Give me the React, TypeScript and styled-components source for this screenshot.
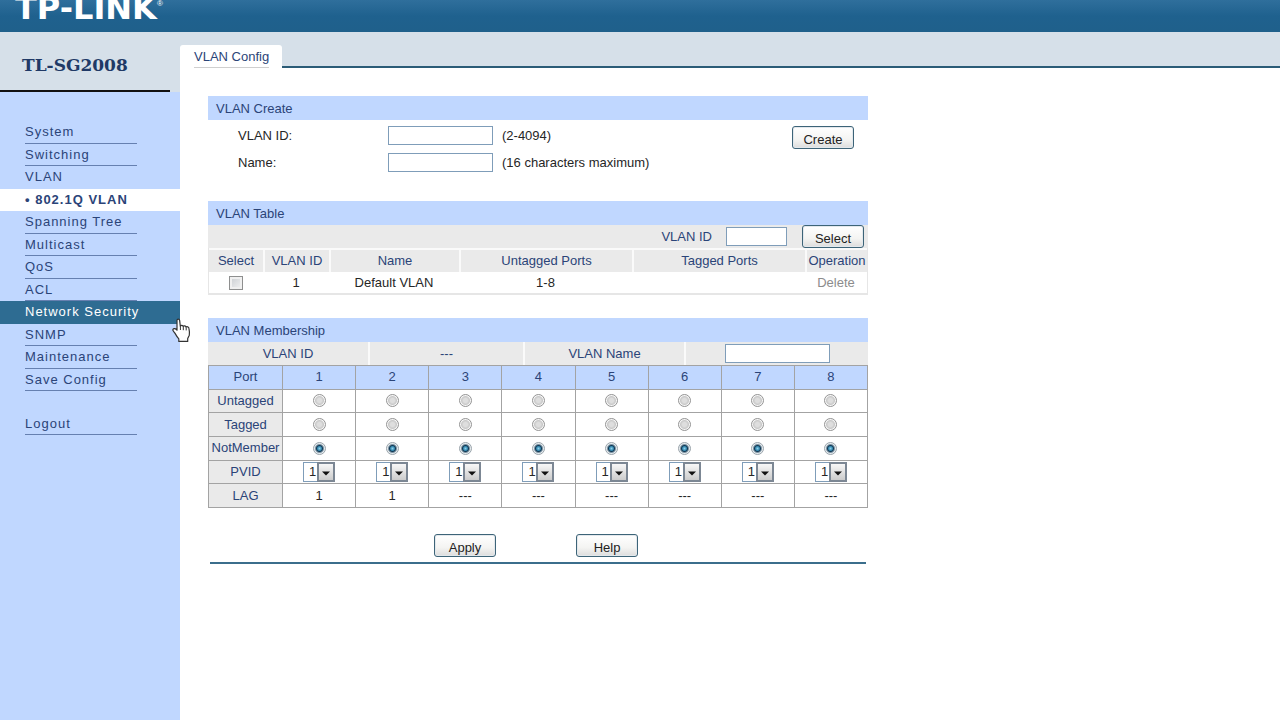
import React from 'react';
import styled, { createGlobalStyle, css } from 'styled-components';

const color = {
  panel: '#c0d7ff',
  strip: '#d6e0e9',
  brand: '#1f618e',
  active: '#2e6c92',
  text: '#2b4478',
  body: '#262626',
  cell: '#eaeaea',
  grid: '#a3a3a3',
};

const GlobalStyle = createGlobalStyle`
  * { box-sizing: border-box; }
  body {
    margin: 0;
    background: #fff;
    font-family: "Liberation Sans", Arial, sans-serif;
    font-size: 13px;
    line-height: 16px;
    color: ${color.body};
  }
  input, button, select { font: inherit; color: inherit; margin: 0; }
  a { color: inherit; text-decoration: none; }
  h1, h2, p { margin: 0; font: inherit; }
`;

const Page = styled.div`
  display: flex;
  flex-direction: column;
  min-height: 100vh;
`;

const TopBar = styled.header`
  height: 32px;
  padding-left: 15px;
  overflow: hidden;
  background: linear-gradient(#2f6f9c, ${color.brand} 50%, #1f608b);
  color: #fff;
`;

const Brand = styled.div`
  display: flex;
  align-items: flex-start;
  margin-top: -10px;
  font: bold 32px/36px "DejaVu Sans", sans-serif;
`;

const Registered = styled.sup`
  margin-top: 10px;
  font: 8px/8px "Liberation Sans", sans-serif;
`;

const Columns = styled.div`
  display: flex;
  flex: 1;
`;

const Sidebar = styled.aside`
  width: 180px;
  flex: none;
  background: ${color.panel};
`;

const ModelBox = styled.div`
  height: 60px;
  padding-right: 10px;
  background: ${color.strip};
`;

const Model = styled.h1`
  height: 60px;
  padding: 22px 0 0 22px;
  border-bottom: 2px solid #111;
  font: bold 17px/22px "DejaVu Serif", serif;
  color: #203966;
`;

const Menu = styled.nav`
  display: grid;
  grid-template-columns: minmax(0, 1fr);
  grid-auto-rows: 1fr;
  height: 270px;
  margin-top: 29px;
`;

const itemStates = {
  plain: css`
    color: ${color.text};
  `,
  open: css`
    color: ${color.text};
    span { border-color: transparent; }
  `,
  current: css`
    background: #fff;
    color: ${color.text};
    font-weight: bold;
    span { border-color: transparent; }
  `,
  hover: css`
    background: ${color.active};
    color: #fff;
    span { border-color: transparent; }
  `,
};

const MenuLink = styled.a<{ $state: keyof typeof itemStates }>`
  position: relative;
  display: flex;
  padding: 0 43px 0 25px;
  letter-spacing: 1px;
  white-space: nowrap;
  ${(p) => itemStates[p.$state]}
`;

const MenuText = styled.span`
  flex: 1;
  min-width: 0;
  padding-top: 3px;
  border-bottom: 1px solid #6680b0;
`;

const LogoutMenu = styled.nav`
  display: grid;
  height: 22px;
  margin-top: 22px;
`;

const HandCursor = styled.svg`
  position: absolute;
  left: 171px;
  top: 17px;
  z-index: 1;
`;

const Main = styled.main`
  flex: 1;
  min-width: 0;
`;

const TabStrip = styled.div`
  display: flex;
  height: 36px;
  padding-top: 13px;
  background: ${color.strip};
`;

const Tab = styled.a`
  width: 102px;
  padding: 4px 13px 0 14px;
  border-radius: 3px 3px 0 0;
  background: #fff;
  color: ${color.text};
  white-space: nowrap;
`;

const TabText = styled.span`
  display: block;
  height: 19px;
  border-bottom: 1px solid #cfcfcf;
`;

const TabRule = styled.div`
  flex: 1;
  border-bottom: 2px solid #2b5c77;
`;

const Content = styled.form`
  max-width: 688px;
  padding: 28px 0 0 28px;
`;

const Section = styled.section<{ $gap: number }>`
  margin-bottom: ${(p) => p.$gap}px;
`;

const Title = styled.h2`
  height: 24px;
  padding: 5px 8px 0;
  background: ${color.panel};
  color: ${color.text};
`;

const CreateBody = styled.div`
  display: flex;
  align-items: flex-start;
  padding: 6px 14px 0 30px;
`;

const Fields = styled.div`
  flex: 1;
  display: grid;
  gap: 8px;
`;

const Field = styled.div`
  display: flex;
  align-items: center;
  height: 19px;
`;

const FieldLabel = styled.label`
  width: 150px;
`;

const Hint = styled.span`
  margin-left: 9px;
`;

const TextBox = styled.input<{ $width: number }>`
  width: ${(p) => p.$width}px;
  height: 19px;
  padding: 0 3px;
  border: 1px solid #7f9db9;
  border-radius: 0;
  background: #fff;
`;

const PushButton = styled.button`
  width: 62px;
  height: 23px;
  padding: 4px 0 0;
  border: 1px solid #3d6478;
  border-radius: 3px;
  background: linear-gradient(#fff, #f4f4f2 60%, #dcdcdc);
  box-shadow: inset 0 0 0 1px #e3e8ec;
  line-height: 16px;
  color: #222;
`;

const SearchRow = styled.div`
  display: flex;
  align-items: center;
  justify-content: flex-end;
  height: 23px;
  padding-right: 4px;
  background: ${color.cell};
  color: ${color.text};
`;

const SearchLabel = styled.label`
  margin-right: 14px;
`;

const SearchBoxWrap = styled.div`
  display: flex;
  margin-right: 15px;
`;

const ListTable = styled.table`
  width: 100%;
  table-layout: fixed;
  border-collapse: separate;
  border-spacing: 0;
  border: 1px solid #e6e6e6;
  border-width: 0 1px 2px;
  text-align: center;

  th {
    height: 24px;
    padding: 0;
    border-top: 2px solid #fafafa;
    background: ${color.cell};
    color: ${color.text};
    font-weight: normal;
    white-space: nowrap;
  }
  th + th { border-left: 2px solid #fafafa; }
  td {
    height: 21px;
    padding: 0;
  }
`;

const Col = styled.col<{ $w?: number }>`
  width: ${(p) => (p.$w ? `${p.$w}px` : 'auto')};
`;

const CheckBox = styled.input`
  appearance: none;
  display: block;
  width: 14px;
  height: 14px;
  margin: 1px auto 0;
  border: 1px solid #8e8f8f;
  background: linear-gradient(135deg, #c8ccd0, #f4f4f4);
  box-shadow: inset 0 0 0 2px #f0f0f0;
`;

const Disabled = styled.a`
  color: #8c8c8c;
`;

const Info = styled.div`
  display: grid;
  grid-template-columns: 160fr 155fr 161fr 184fr;
  height: 23px;
  background: ${color.cell};
  color: ${color.text};
`;

const InfoCell = styled.div`
  display: flex;
  align-items: center;
  justify-content: center;
  & + & { border-left: 2px solid #fafafa; }
`;

const PortTable = styled.table`
  width: 100%;
  height: 143px;
  table-layout: fixed;
  border-collapse: collapse;
  text-align: center;

  th, td {
    height: 23px;
    padding: 0;
    border: 1px solid ${color.grid};
  }
  th {
    background: ${color.cell};
    color: ${color.text};
    font-weight: normal;
  }
  th[scope='col'] { background: ${color.panel}; }
`;

const Radio = styled.input`
  appearance: none;
  display: block;
  width: 13px;
  height: 13px;
  margin: 0 auto;
  border: 1px solid #949494;
  border-radius: 50%;
  background: radial-gradient(circle, #dedede 0 2px, #c9c9c9 4px, #f6f6f6 5px);

  &:checked {
    border-color: #9aa4ab;
    background: radial-gradient(circle, #8fd0ea 0, #3589b0 2px, #123a56 3px, #e6ebee 5px);
  }
`;

const Picker = styled.span`
  position: relative;
  display: block;
  width: 32px;
  height: 20px;
  margin: 0 auto;
`;

const PickerSelect = styled.select`
  appearance: none;
  display: block;
  width: 100%;
  height: 100%;
  padding: 0 0 0 5px;
  border: 1px solid #7f9db9;
  border-radius: 0;
  background: #fff;
`;

const PickerArrow = styled.svg`
  position: absolute;
  right: 0;
  top: 0;
  pointer-events: none;
`;

const Actions = styled.div`
  display: flex;
  justify-content: center;
  gap: 80px;
  margin: 0 2px;
  padding: 0 4px 5px 0;
  border-bottom: 2px solid #3b6e8c;
`;

type ItemState = keyof typeof itemStates;

const menu: [string, ItemState][] = [
  ['System', 'plain'],
  ['Switching', 'plain'],
  ['VLAN', 'open'],
  ['• 802.1Q VLAN', 'current'],
  ['Spanning Tree', 'plain'],
  ['Multicast', 'plain'],
  ['QoS', 'plain'],
  ['ACL', 'plain'],
  ['Network Security', 'hover'],
  ['SNMP', 'plain'],
  ['Maintenance', 'plain'],
  ['Save Config', 'plain'],
];

const ports = [1, 2, 3, 4, 5, 6, 7, 8];
const modes = ['Untagged', 'Tagged', 'NotMember'];
const lag = ['1', '1', '---', '---', '---', '---', '---', '---'];

function Hand() {
  return (
    <HandCursor width="20" height="25" viewBox="0 0 20 25" aria-hidden="true">
      <path
        d="M6 2.600c0-1.900 2.500-1.900 2.700 0l.6 5.600c.5-1.300 2.700-1.100 2.900.3.600-1 2.500-.8 2.800.7.800-.9 2.700-.5 2.900 1 .5 2.500.9 4.800.4 7l-1.600 3.200v3H7.800v-2.600c-1.600-1.800-2.700-3.500-3.900-5.700-.8-1.400-2.700-2.600-2-3.800.9-1.300 2.900-.6 4.100.9V2.600z"
        fill="#fff"
        stroke="#333"
        strokeWidth="1.2"
        strokeLinejoin="round"
      />
      <path d="M9.400 8.200v3.800M12.300 8.600v3.600M15.200 9.400v3" fill="none" stroke="#333" />
    </HandCursor>
  );
}

function PortPicker({ port }: { port: number }) {
  return (
    <Picker>
      <PickerSelect aria-label={`PVID of port ${port}`} defaultValue="1">
        <option>1</option>
      </PickerSelect>
      <PickerArrow width="18" height="20" viewBox="0 0 18 20" aria-hidden="true">
        <defs>
          <linearGradient id={`face${port}`} x2="0" y2="1">
            <stop offset="0" stopColor="#fafafa" />
            <stop offset="1" stopColor="#c9c9c9" />
          </linearGradient>
        </defs>
        <rect x="1" y="1" width="16" height="18" fill={`url(#face${port})`} stroke="#7c8794" strokeWidth="2" />
        <path d="M5 9.500h8l-4 4z" fill="#111" />
      </PickerArrow>
    </Picker>
  );
}

export default function App() {
  return (
    <Page>
      <GlobalStyle />
      <TopBar>
        <Brand>
          TP-LINK<Registered>®</Registered>
        </Brand>
      </TopBar>
      <Columns>
        <Sidebar>
          <ModelBox>
            <Model>TL-SG2008</Model>
          </ModelBox>
          <Menu aria-label="Main menu">
            {menu.map(([name, state]) => (
              <MenuLink key={name} href="#" $state={state}>
                <MenuText>{name}</MenuText>
                {state === 'hover' && <Hand />}
              </MenuLink>
            ))}
          </Menu>
          <LogoutMenu aria-label="Session">
            <MenuLink href="#" $state="plain">
              <MenuText>Logout</MenuText>
            </MenuLink>
          </LogoutMenu>
        </Sidebar>
        <Main>
          <TabStrip>
            <Tab href="#">
              <TabText>VLAN Config</TabText>
            </Tab>
            <TabRule />
          </TabStrip>
          <Content onSubmit={(e) => e.preventDefault()}>
            <Section $gap={29}>
              <Title>VLAN Create</Title>
              <CreateBody>
                <Fields>
                  <Field>
                    <FieldLabel htmlFor="new-id">VLAN ID:</FieldLabel>
                    <TextBox id="new-id" $width={105} />
                    <Hint>(2-4094)</Hint>
                  </Field>
                  <Field>
                    <FieldLabel htmlFor="new-name">Name:</FieldLabel>
                    <TextBox id="new-name" $width={105} maxLength={16} />
                    <Hint>(16 characters maximum)</Hint>
                  </Field>
                </Fields>
                <PushButton type="button">Create</PushButton>
              </CreateBody>
            </Section>

            <Section $gap={23}>
              <Title>VLAN Table</Title>
              <SearchRow>
                <SearchLabel htmlFor="find-id">VLAN ID</SearchLabel>
                <SearchBoxWrap>
                  <TextBox id="find-id" $width={61} />
                </SearchBoxWrap>
                <PushButton type="button">Select</PushButton>
              </SearchRow>
              <ListTable>
                <colgroup>
                  {[54, 66, 130, 173, 173].map((w, i) => (
                    <Col key={i} $w={w} />
                  ))}
                  <Col />
                </colgroup>
                <thead>
                  <tr>
                    {['Select', 'VLAN ID', 'Name', 'Untagged Ports', 'Tagged Ports', 'Operation'].map((h) => (
                      <th key={h} scope="col">
                        {h}
                      </th>
                    ))}
                  </tr>
                </thead>
                <tbody>
                  <tr>
                    <td>
                      <CheckBox type="checkbox" aria-label="Select VLAN 1" />
                    </td>
                    <td>1</td>
                    <td>Default VLAN</td>
                    <td>1-8</td>
                    <td />
                    <td>
                      <Disabled href="#" aria-disabled="true">
                        Delete
                      </Disabled>
                    </td>
                  </tr>
                </tbody>
              </ListTable>
            </Section>

            <Section $gap={26}>
              <Title>VLAN Membership</Title>
              <Info>
                <InfoCell>VLAN ID</InfoCell>
                <InfoCell>---</InfoCell>
                <InfoCell>
                  <label htmlFor="member-name">VLAN Name</label>
                </InfoCell>
                <InfoCell>
                  <TextBox id="member-name" $width={105} />
                </InfoCell>
              </Info>
              <PortTable>
                <colgroup>
                  <Col $w={74} />
                  {ports.map((p) => (
                    <Col key={p} />
                  ))}
                </colgroup>
                <tbody>
                  <tr>
                    <th scope="col">Port</th>
                    {ports.map((p) => (
                      <th key={p} scope="col">
                        {p}
                      </th>
                    ))}
                  </tr>
                  {modes.map((mode) => (
                    <tr key={mode}>
                      <th scope="row">{mode}</th>
                      {ports.map((p) => (
                        <td key={p}>
                          <Radio
                            type="radio"
                            name={`port-${p}`}
                            aria-label={`Port ${p} ${mode}`}
                            defaultChecked={mode === 'NotMember'}
                          />
                        </td>
                      ))}
                    </tr>
                  ))}
                  <tr>
                    <th scope="row">PVID</th>
                    {ports.map((p) => (
                      <td key={p}>
                        <PortPicker port={p} />
                      </td>
                    ))}
                  </tr>
                  <tr>
                    <th scope="row">LAG</th>
                    {ports.map((p, i) => (
                      <td key={p}>{lag[i]}</td>
                    ))}
                  </tr>
                </tbody>
              </PortTable>
            </Section>

            <Actions>
              <PushButton type="button">Apply</PushButton>
              <PushButton type="button">Help</PushButton>
            </Actions>
          </Content>
        </Main>
      </Columns>
    </Page>
  );
}
